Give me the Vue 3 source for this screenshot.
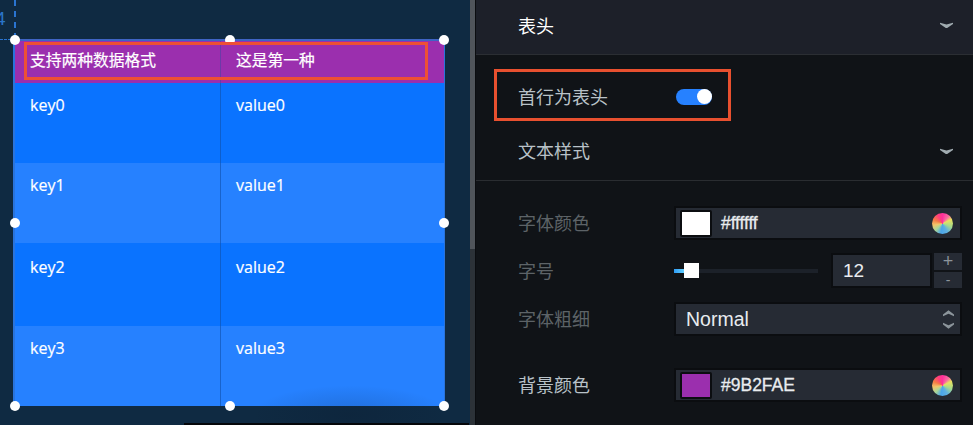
<script setup>
const rows = [
  { key: 'key0', value: 'value0', cls: 'tall-a dark' },
  { key: 'key1', value: 'value1', cls: 'tall-a light' },
  { key: 'key2', value: 'value2', cls: 'tall-c dark' },
  { key: 'key3', value: 'value3', cls: 'tall-a light' }
]
const handles = ['tl', 'tc', 'tr', 'ml', 'mr', 'bl', 'bc', 'br']
</script>

<template>
  <div class="page">
    <section class="canvas">
      <span class="ruler-num">4</span>
      <i class="guide-v"></i>
      <i class="guide-h"></i>
      <div class="widget">
        <div class="row head">
          <div class="cell first">支持两种数据格式</div>
          <div class="cell">这是第一种</div>
        </div>
        <div v-for="r in rows" :key="r.key" class="row" :class="r.cls">
          <div class="cell first">{{ r.key }}</div>
          <div class="cell">{{ r.value }}</div>
        </div>
        <i v-for="h in handles" :key="h" class="handle" :class="h"></i>
        <i class="mark-table"></i>
      </div>
      <i class="glow"></i>
      <i class="strip"></i>
    </section>
    <div class="scrollbar"><i class="thumb"></i></div>
    <aside class="panel">
      <header class="group-head">
        <span>表头</span>
        <svg class="chev" viewBox="0 0 13 6"><path d="M0 0.8 L6.5 2.6 L13 0.8 L13 2 L7.2 6 L5.8 6 L0 2 Z" /></svg>
      </header>
      <div class="group-body">
        <div class="toggle-row">
          <span class="label-strong">首行为表头</span>
          <span class="switch"><i></i></span>
          <i class="mark-toggle"></i>
        </div>
        <div class="text-head">
          <span class="label-strong">文本样式</span>
          <svg class="chev" viewBox="0 0 13 6"><path d="M0 0.8 L6.5 2.6 L13 0.8 L13 2 L7.2 6 L5.8 6 L0 2 Z" /></svg>
        </div>
      </div>
      <div class="form">
        <div class="form-row r1">
          <span class="label-dim">字体颜色</span>
          <div class="field color">
            <i class="swatch white"></i>
            <span class="hex thin">#ffffff</span>
            <i class="wheel"></i>
          </div>
        </div>
        <div class="form-row r2">
          <span class="label-dim">字号</span>
          <div class="size-ctl">
            <div class="slider"><i class="fill"></i><i class="knob"></i></div>
            <div class="number">12</div>
            <div class="steppers">
              <span class="plus">+</span>
              <span class="minus">-</span>
            </div>
          </div>
        </div>
        <div class="form-row r3">
          <span class="label-dim">字体粗细</span>
          <div class="field select">
            <span>Normal</span>
            <svg class="updown" viewBox="0 0 12 20">
              <path d="M6 0 L12 4.5 L12 6.5 L6 3.8 L0 6.5 L0 4.5 Z" />
              <path d="M0 13.5 L6 16.2 L12 13.5 L12 15.5 L6 20 L0 15.5 Z" />
            </svg>
          </div>
        </div>
        <div class="form-row r4">
          <span class="label-strong">背景颜色</span>
          <div class="field color">
            <i class="swatch purple"></i>
            <span class="hex">#9B2FAE</span>
            <i class="wheel"></i>
          </div>
        </div>
      </div>
    </aside>
  </div>
</template>

<style scoped>
.page {
  display: flex;
  width: 973px;
  height: 425px;
  overflow: hidden;
  background: #101317;
  font-family: "Noto Sans CJK SC", "Liberation Sans", sans-serif;
}
.canvas {
  position: relative;
  flex: 0 0 470px;
  height: 425px;
  box-sizing: border-box;
  padding: 39px 0 0 13px;
  background: #0f2a42;
  overflow: hidden;
}
.ruler-num {
  position: absolute;
  left: -5px;
  top: 8px;
  font: 19px "Liberation Sans", sans-serif;
  color: #2a74c8;
}
.guide-v {
  position: absolute;
  left: 14px;
  top: 0;
  height: 39px;
  border-left: 2px dashed #2a74d0;
}
.guide-h {
  position: absolute;
  left: 0;
  top: 39px;
  width: 15px;
  border-top: 1px dashed #2a74d0;
}
.widget {
  position: relative;
  width: 432px;
  height: 367px;
  box-sizing: border-box;
  border-left: 2px solid #2a74dc;
  border-right: 1px solid #2a74dc;
  border-top: 2px solid #3f64c4;
  background: #2681ff;
}
.row {
  display: flex;
  color: #fff;
  font-size: 16px;
}
.cell {
  flex: 1 1 0;
  box-sizing: border-box;
  padding: 11px 0 0 15px;
  font-family: "Open Sans", "Noto Sans CJK SC", sans-serif;
  line-height: 22px;
  -webkit-text-stroke: 0.2px #fff;
}
.cell.first {
  flex: 0 0 206px;
  border-right: 1px solid rgba(15, 80, 170, 0.6);
}
.head {
  height: 42px;
  background: #9b2fae;
  font-size: 15.75px;
}
.head .cell {
  padding-top: 8px;
  font-family: "Noto Sans CJK SC", sans-serif;
}
.head .cell.first {
  border-right-color: #6c3aa8;
}
.dark {
  background: #0a73ff;
}
.light {
  background: #2681ff;
}
.tall-a {
  height: 80px;
}
.tall-c {
  height: 83px;
}
.tall-c .cell {
  padding-top: 13px;
}
.mark-table {
  position: absolute;
  left: 9px;
  top: 1px;
  width: 404px;
  height: 38px;
  box-sizing: border-box;
  border: 3px solid #ee5035;
}
.handle {
  position: absolute;
  width: 10px;
  height: 10px;
  border-radius: 50%;
  background: #fff;
}
.tl, .tr, .tc { top: -6px; }
.ml, .mr { top: 177px; }
.bl, .bc, .br { top: 360px; }
.tl, .ml, .bl { left: -5px; }
.tc, .bc { left: 210px; }
.tr, .mr, .br { left: 424px; }
.glow {
  position: absolute;
  left: 250px;
  top: 385px;
  width: 200px;
  height: 60px;
  background: radial-gradient(ellipse at center, rgba(8, 20, 40, 0.18), rgba(8, 20, 40, 0) 70%);
  pointer-events: none;
}
.strip {
  position: absolute;
  left: 184px;
  right: 1px;
  bottom: 0;
  height: 2px;
  background: #05070a;
}
.scrollbar {
  flex: 0 0 5px;
  background: #2c3238;
}
.thumb {
  display: block;
  height: 249px;
  background: #50555b;
}
.panel {
  flex: 1 1 0;
  border-left: 1px solid #0b0d10;
}
.group-head {
  display: flex;
  align-items: center;
  justify-content: space-between;
  height: 55px;
  box-sizing: border-box;
  padding: 0 20px 3px 42px;
  background: #1d2029;
  border-bottom: 1px solid #2b2e33;
  color: #fff;
  font-size: 18px;
}
.group-head > span {
  margin-bottom: 2px;
}
.chev {
  width: 13px;
  height: 6px;
  margin-top: -1px;
  fill: #a0abb0;
}
.group-body {
  border-bottom: 1px solid #2a2d31;
  height: 126px;
  box-sizing: border-box;
}
.toggle-row {
  position: relative;
  display: flex;
  align-items: center;
  height: 84px;
  padding-left: 42px;
}
.label-strong {
  color: #b9c2c8;
  font-size: 18px;
  margin-bottom: 2px;
}
.label-dim {
  color: #5d6367;
  font-size: 18px;
  margin-bottom: 2px;
}
.switch {
  position: relative;
  display: block;
  width: 36px;
  height: 16px;
  margin-left: 68px;
  border-radius: 8px;
  background: #2681ff;
}
.switch i {
  position: absolute;
  right: 0;
  top: 0;
  width: 15px;
  height: 15px;
  border-radius: 50%;
  background: #fff;
}
.mark-toggle {
  position: absolute;
  left: 18px;
  top: 14px;
  width: 237px;
  height: 52px;
  box-sizing: border-box;
  border: 3px solid #e8502f;
}
.text-head {
  display: flex;
  align-items: center;
  justify-content: space-between;
  height: 24px;
  padding: 0 20px 0 42px;
}
.form {
  padding: 25px 11px 0 42px;
}
.form-row {
  display: flex;
  align-items: center;
  height: 34px;
}
.form-row > span {
  flex: 0 0 156px;
}
.r2 {
  height: 35px;
  margin-top: 13px;
}
.r3 {
  margin-top: 14px;
}
.r4 {
  margin-top: 32px;
}
.field {
  flex: 1 1 0;
  display: flex;
  align-items: center;
  height: 34px;
  box-sizing: border-box;
  border: 2px solid #0b0d10;
  background: #262b34;
  color: #e9ecef;
}
.color {
  padding: 0 7px 0 4px;
}
.swatch {
  display: block;
  width: 32px;
  height: 27px;
  box-sizing: border-box;
  border: 2px solid #0b0d10;
  border-radius: 2px;
}
.white {
  background: #fff;
}
.purple {
  background: #9b2fae;
}
.hex {
  margin-left: 9px;
  font: 17.5px "Liberation Sans", sans-serif;
  -webkit-text-stroke: 0.3px #e9ecef;
}
.hex.thin {
  letter-spacing: -0.1px;
}
.wheel {
  display: block;
  width: 21px;
  height: 21px;
  margin-left: auto;
  border-radius: 50%;
  background: conic-gradient(#ff2f9c 0deg, #f76ea0 40deg, #e9e05e 65deg, #a6dc8a 110deg, #5fb0e0 150deg, #4aa5ea 190deg, #a8d69a 225deg, #f3c66a 260deg, #f67a45 295deg, #ff3f78 330deg, #ff2f9c 360deg);
}
.select {
  justify-content: space-between;
  padding: 0 6px 0 10px;
  font: 19.5px "Liberation Sans", sans-serif;
}
.updown {
  width: 11px;
  height: 19px;
  fill: #8c959b;
}
.size-ctl {
  flex: 1 1 0;
  display: flex;
  align-items: center;
}
.slider {
  position: relative;
  flex: 0 0 144px;
  height: 4px;
  background: #1c2129;
}
.fill {
  position: absolute;
  left: 0;
  top: 0;
  width: 12px;
  height: 4px;
  background: linear-gradient(90deg, #2f9cf5, #6ad8ff);
}
.knob {
  position: absolute;
  left: 10px;
  top: -6px;
  width: 15px;
  height: 15px;
  background: #fff;
}
.number {
  flex: 0 0 101px;
  height: 35px;
  box-sizing: border-box;
  margin-left: 13px;
  padding-left: 10px;
  border: 2px solid #0b0d10;
  background: #262b34;
  color: #e9ecef;
  font: 19px/31px "Liberation Sans", sans-serif;
}
.steppers {
  display: flex;
  flex-direction: column;
  flex: 0 0 28px;
  height: 35px;
  margin-left: 2px;
  font: 14px/16px "Liberation Sans", sans-serif;
  color: #8c959b;
  text-align: center;
}
.plus, .minus {
  display: block;
  flex: 1 1 0;
  background: #262b34;
  font-size: 18px;
}
.minus {
  margin-top: 2px;
  font-size: 14px;
}
</style>
